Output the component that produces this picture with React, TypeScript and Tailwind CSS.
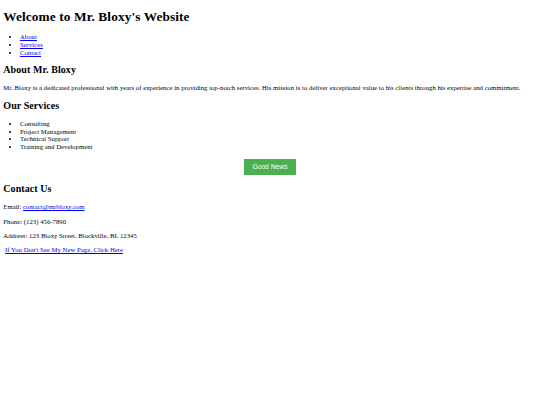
import React from "react";

export default function App() {
  const link = "text-[#0000EE] underline";
  const h2 = "text-[10px] leading-[11.5px] font-bold my-[8.3px] tracking-[0.07px]";
  const p = "my-[6.667px]";
  return (
    <div className="m-[3.333px] font-['Liberation_Serif',serif] text-[6.667px] leading-[7.667px] tracking-[0.045px] text-black bg-white">
      <h1 className="text-[13.333px] leading-[15.333px] font-bold my-[8.933px] tracking-[0.1px]">Welcome to Mr. Bloxy's Website</h1>
      <ul className="list-disc pl-[16.667px] my-[6.667px]">
        <li><a href="#" className={link}>About</a></li>
        <li><a href="#" className={link}>Services</a></li>
        <li><a href="#" className={link}>Contact</a></li>
      </ul>
      <h2 className={h2}>About Mr. Bloxy</h2>
      <p className={p}>
        Mr. Bloxy is a dedicated professional with years of experience in providing top-notch services. His mission is to deliver exceptional value to his clients through his expertise and commitment.
      </p>
      <h2 className={h2}>Our Services</h2>
      <ul className="list-disc pl-[16.667px] my-[6.667px]">
        <li>Consulting</li>
        <li>Project Management</li>
        <li>Technical Support</li>
        <li>Training and Development</li>
      </ul>
      <div className="text-center my-[8.333px]">
        <button className="bg-[#4CAF50] text-white px-[8.333px] py-[4.167px] text-[6.667px] leading-[7.667px] font-['Liberation_Sans',sans-serif] border-0">
          Good News
        </button>
      </div>
      <h2 className={h2}>Contact Us</h2>
      <p className={p}>
        Email: <a href="#" className={link}>contact@mrbloxy.com</a>
      </p>
      <p className={p}>Phone: (123) 456-7890</p>
      <p className={p}>Address: 123 Bloxy Street, Blockville, BL 12345</p>
      <p className={p}>
        {"\u00a0"}<a href="#" className={link}>If You Don't See My New Page, Click Here</a>
      </p>
    </div>
  );
}
